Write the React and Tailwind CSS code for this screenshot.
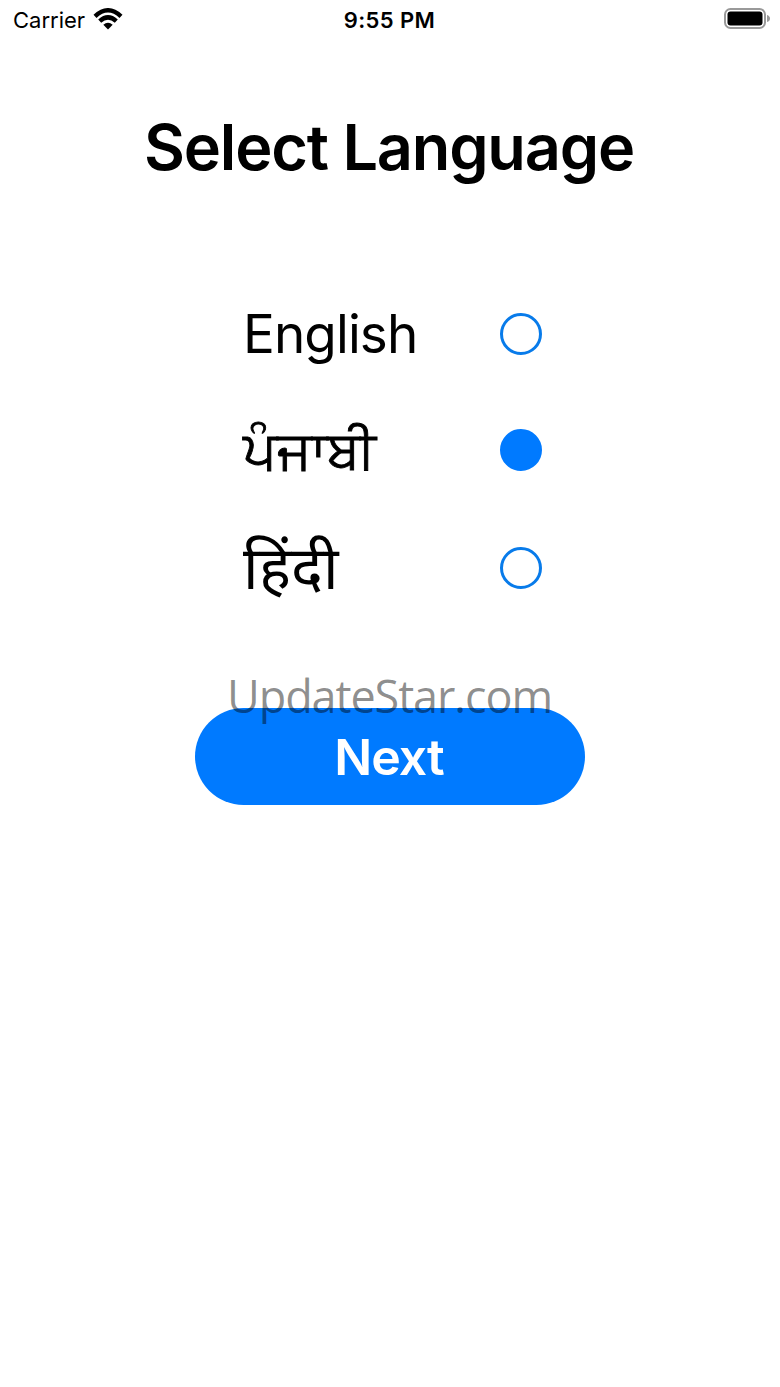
const languages = [
  { name: 'English', selected: false, row: 'h-[84px]', label: '-ml-px pt-[1px] text-[53px] tracking-[-0.9px]' },
  { name: 'ਪੰਜਾਬੀ', selected: true, row: 'h-[84px] mt-[32px]', label: '-ml-px pb-[1px] text-[52.5px] [-webkit-text-stroke:0.9px_black]' },
  { name: 'हिंदी', selected: false, row: 'h-[84px] mt-[34px]', label: '-ml-px pb-[3px] text-[60px]' },
];

function Wifi() {
  return (
    <svg className="ml-[8px] mb-[2px] h-[22px] w-[30px]" viewBox="0 0 30 22" fill="none" stroke="#000" strokeWidth="4.4">
      <path d="M2 8.3 Q15 -3.7 28 8.3" />
      <path d="M6.7 13.2 Q15 5.6 23.3 13.2" />
      <path d="M10.3 16.7 Q15 12.8 19.7 16.7 L15 21.4 Z" fill="#000" stroke="none" />
    </svg>
  );
}

function Battery() {
  return (
    <svg className="mb-[2px] h-[22px] w-[48px]" viewBox="0 0 48 22">
      <rect x="1" y="1" width="40" height="19" rx="5.5" fill="none" stroke="#999" strokeWidth="2" />
      <rect x="3.5" y="3.5" width="35" height="14" rx="3" fill="#000" />
      <path d="M43 7 Q46 8 46 10.5 Q46 13 43 14 Z" fill="#999" />
    </svg>
  );
}

export default function App() {
  return (
    <main className="flex h-[1387px] w-[780px] flex-col items-center bg-white font-['Inter',sans-serif] text-black">
      <header className="grid h-10 w-full grid-cols-[1fr_auto_1fr] items-center pl-[13px] pr-[8px]">
        <div className="flex items-center text-[22px]"><span>Carrier</span><Wifi /></div>
        <span className="mr-[6px] text-center text-[22px] font-semibold tracking-[0.4px]">9:55 PM</span>
        <div className="flex justify-end"><Battery /></div>
      </header>
      <h1 className="mr-[2px] mt-[62px] h-[90px] whitespace-nowrap text-[63px] font-semibold leading-[90px] tracking-[-1.2px]">Select Language</h1>
      <div className="ml-[6px] mt-[100px] flex w-[298px] flex-col">
        {languages.map((l) => (
          <div key={l.name} className={`flex items-center justify-between ${l.row}`}>
            <span className={`whitespace-nowrap ${l.label}`}>{l.name}</span>
            <span className={`size-[42px] rounded-full border-[3px] ${l.selected ? 'border-[#007aff] bg-[#007aff]' : 'border-[#087bea]'}`} />
          </div>
        ))}
      </div>
      <div className="relative mt-[98px]">
        <button className="h-[97px] w-[390px] rounded-full bg-[#007aff] pr-[2px] pt-[1px] text-[50px] font-semibold tracking-[-1px] text-white">Next</button>
        <span className="absolute left-[32px] top-[-44px] font-['Open_Sans',sans-serif] text-[45px] leading-[64px] tracking-[-1.1px] text-black/45">UpdateStar.com</span>
      </div>
    </main>
  );
}
